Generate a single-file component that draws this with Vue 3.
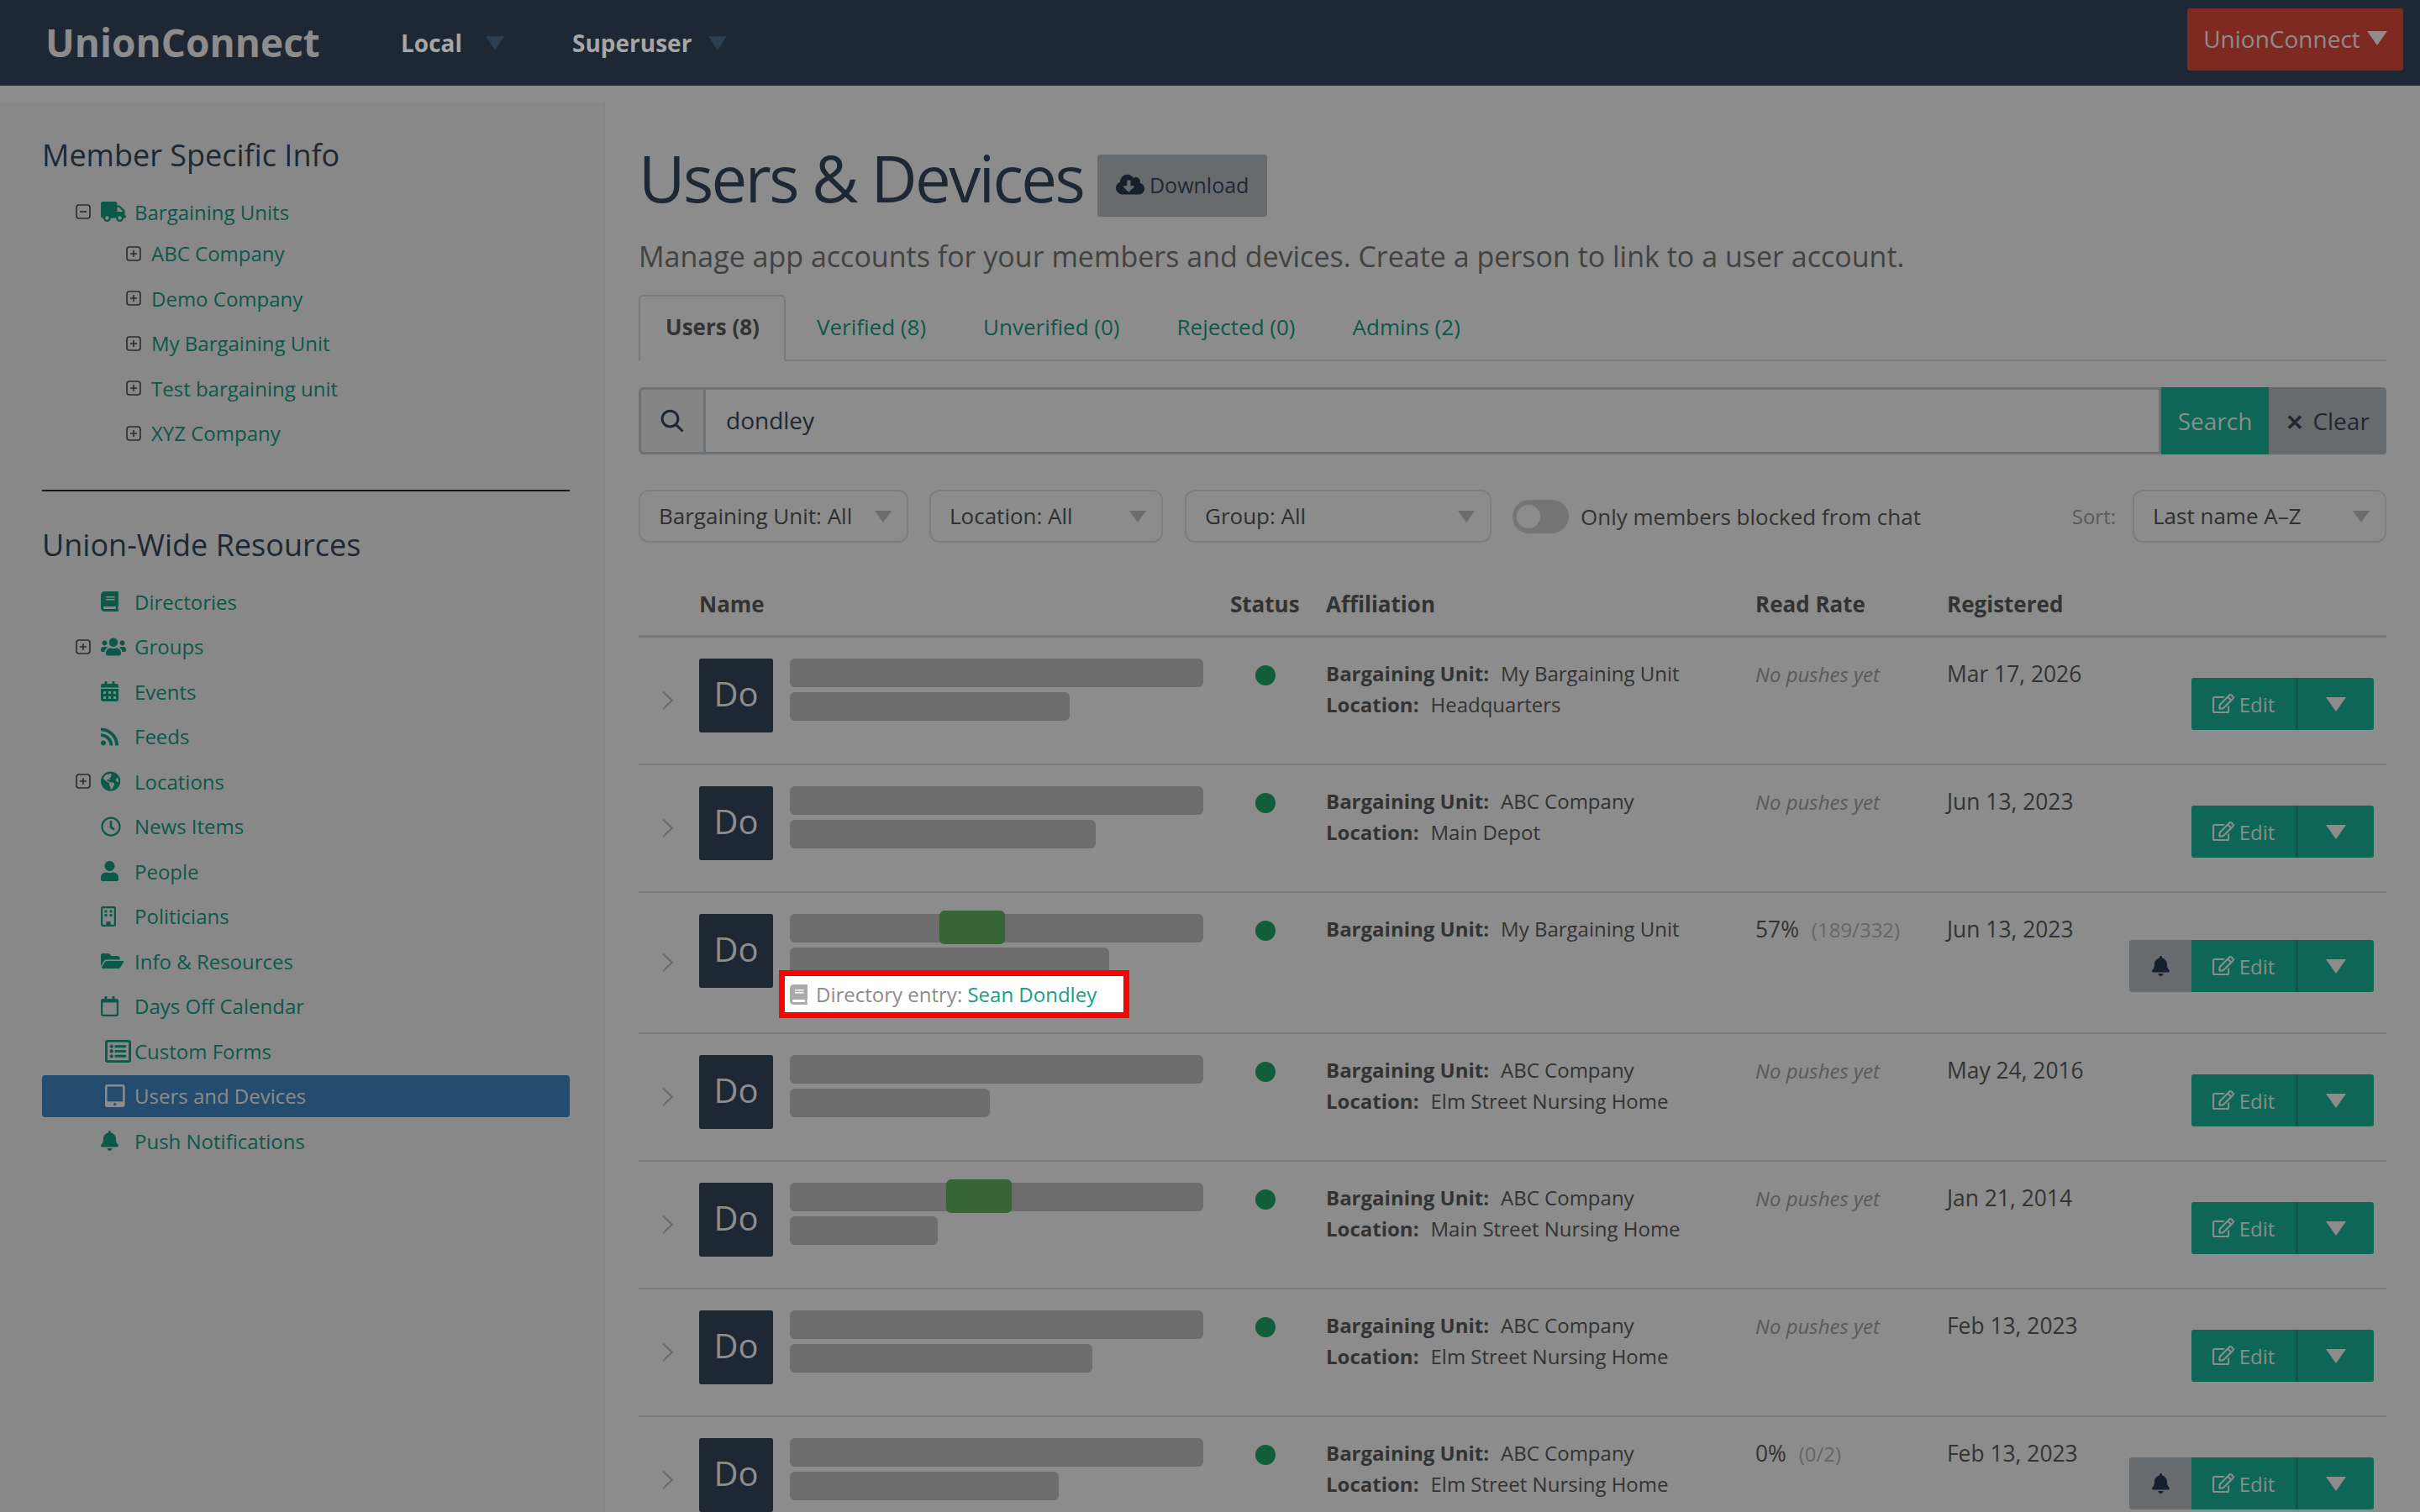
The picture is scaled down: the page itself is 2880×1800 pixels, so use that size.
<template>
  <div class="page">
    <header class="topbar">
      <div class="logo">UnionConnect</div>
      <div class="nav-item local">Local <span class="nav-caret"></span></div>
      <div class="nav-item super">Superuser <span class="nav-caret"></span></div>
      <button class="account">UnionConnect <span class="account-caret"></span></button>
    </header>

    <div class="layout">
      <aside class="sidebar">
        <h2 class="side-title">Member Specific Info</h2>
        <ul class="tree first-tree">
          <li class="tree-row head-row">
            <span class="toggle"><svg viewBox="0 0 18 18"><rect x="1" y="1" width="16" height="16" rx="3" /><path d="M5 9h8" /></svg></span>
            <span class="ico"><svg viewBox="0 0 640 512"><path :d="icons.truck.d" /></svg></span>
            <a>Bargaining Units</a>
          </li>
          <li v-for="unit in units" :key="unit" class="tree-row sub-row">
            <span class="toggle"><svg viewBox="0 0 18 18"><rect x="1" y="1" width="16" height="16" rx="3" /><path d="M5 9h8M9 5v8" /></svg></span>
            <a>{{ unit }}</a>
          </li>
        </ul>
        <hr class="side-rule" />
        <h2 class="side-title">Union-Wide Resources</h2>
        <ul class="tree second-tree">
          <li v-for="item in resources" :key="item.label" class="tree-row" :class="{ active: item.active }">
            <span class="toggle">
              <svg v-if="item.plus" viewBox="0 0 18 18"><rect x="1" y="1" width="16" height="16" rx="3" /><path d="M5 9h8M9 5v8" /></svg>
            </span>
            <span class="ico" :class="item.icon">
              <svg :viewBox="icons[item.icon].box"><path fill-rule="evenodd" :d="icons[item.icon].d" /></svg>
            </span>
            <a>{{ item.label }}</a>
          </li>
        </ul>
      </aside>

      <main class="content">
        <div class="title-row">
          <h1>Users &amp; Devices</h1>
          <button class="download">
            <svg viewBox="0 0 640 512"><path :d="icons.cloud.d" /></svg>
            Download
          </button>
        </div>
        <p class="lead">Manage app accounts for your members and devices. Create a person to link to a user account.</p>

        <nav class="tabs">
          <a class="tab active">Users (8)</a>
          <a class="tab">Verified (8)</a>
          <a class="tab">Unverified (0)</a>
          <a class="tab">Rejected (0)</a>
          <a class="tab">Admins (2)</a>
        </nav>

        <div class="search">
          <span class="search-icon">
            <svg viewBox="0 0 24 24"><circle cx="10" cy="10" r="7.5" /><path d="M15.500 15.500 22 22" /></svg>
          </span>
          <input class="search-input" value="dondley" readonly />
          <button class="search-btn">Search</button>
          <button class="clear-btn"><span class="x">✕</span> Clear</button>
        </div>

        <div class="filters">
          <div class="select bu">Bargaining Unit: All<span class="tri"></span></div>
          <div class="select loc">Location: All<span class="tri"></span></div>
          <div class="select grp">Group: All<span class="tri"></span></div>
          <span class="switch"><span class="knob"></span></span>
          <span class="switch-label">Only members blocked from chat</span>
          <span class="sort-label">Sort:</span>
          <div class="select sort">Last name A–Z<span class="tri"></span></div>
        </div>

        <div class="table-head">
          <span></span>
          <span>Name</span>
          <span>Status</span>
          <span>Affiliation</span>
          <span>Read Rate</span>
          <span>Registered</span>
        </div>

        <div v-for="(row, i) in rows" :key="i" class="row" :class="{ tall: row.entry }">
          <span class="chev">
            <svg viewBox="0 0 14 22"><path d="M2 1.500 12 11 2 20.500" /></svg>
          </span>
          <div class="name-cell">
            <div class="avatar">Do</div>
            <div class="bars">
              <div class="bar">
                <span v-if="row.green" class="green" :style="{ left: row.green + 'px' }"></span>
              </div>
              <div class="bar" :style="{ width: row.bar + 'px' }"></div>
              <div v-if="row.entry" class="entry">
                <svg viewBox="0 0 448 512"><path :d="icons.book.d" /></svg>
                Directory entry:&nbsp;<a>Sean Dondley</a>
              </div>
            </div>
          </div>
          <div class="status-cell"><span class="dot"></span></div>
          <div class="aff-cell">
            <div><b>Bargaining Unit:</b>{{ row.unit }}</div>
            <div v-if="row.loc"><b>Location:</b>{{ row.loc }}</div>
          </div>
          <div class="rate-cell">
            <em v-if="!row.rate">No pushes yet</em>
            <template v-else>{{ row.rate }} <small>{{ row.count }}</small></template>
          </div>
          <div class="date-cell">{{ row.date }}</div>
          <div class="actions">
            <button v-if="row.rate" class="bell-btn">
              <svg viewBox="0 0 448 512"><path :d="icons.bell.d" /></svg>
            </button>
            <button class="edit">
              <svg viewBox="0 0 576 512"><path :d="icons.edit.d" /></svg>
              Edit
            </button>
            <button class="more"><span class="more-tri"></span></button>
          </div>
        </div>
      </main>
    </div>
  </div>
</template>

<script setup>
const icons = {
  truck: { box: '0 0 640 512', d: 'M624 352h-16V243.9c0-12.7-5.1-24.9-14.1-33.9L494 110.1c-9-9-21.2-14.1-33.9-14.1H416V48c0-26.5-21.5-48-48-48H48C21.5 0 0 21.5 0 48v320c0 26.5 21.5 48 48 48h16c0 53 43 96 96 96s96-43 96-96h128c0 53 43 96 96 96s96-43 96-96h48c8.8 0 16-7.2 16-16v-32c0-8.8-7.2-16-16-16zM160 464c-26.5 0-48-21.5-48-48s21.5-48 48-48 48 21.5 48 48-21.5 48-48 48zm320 0c-26.5 0-48-21.5-48-48s21.5-48 48-48 48 21.5 48 48-21.5 48-48 48zm80-208H416V144h44.1l99.9 99.9V256z' },
  book: { box: '0 0 448 512', d: 'M448 360V24c0-13.3-10.7-24-24-24H96C43 0 0 43 0 96v320c0 53 43 96 96 96h328c13.3 0 24-10.7 24-24v-16c0-7.5-3.5-14.3-8.9-18.7-4.2-15.4-4.2-59.3 0-74.7 5.4-4.3 8.9-11.1 8.9-18.6zM128 134c0-3.3 2.7-6 6-6h212c3.3 0 6 2.7 6 6v20c0 3.3-2.7 6-6 6H134c-3.3 0-6-2.7-6-6v-20zm0 64c0-3.3 2.7-6 6-6h212c3.3 0 6 2.7 6 6v20c0 3.3-2.7 6-6 6H134c-3.3 0-6-2.7-6-6v-20zm253.4 250H96c-17.7 0-32-14.3-32-32 0-17.6 14.4-32 32-32h285.4c-1.9 17.1-1.9 46.9 0 64z' },
  users: { box: '0 0 640 512', d: 'M96 224c35.3 0 64-28.7 64-64s-28.7-64-64-64-64 28.7-64 64 28.7 64 64 64zm448 0c35.3 0 64-28.7 64-64s-28.7-64-64-64-64 28.7-64 64 28.7 64 64 64zm32 32h-64c-17.6 0-33.5 7.1-45.1 18.6 40.3 22.1 68.9 62 75.1 109.4h66c17.7 0 32-14.3 32-32v-32c0-35.3-28.7-64-64-64zm-256 0c61.9 0 112-50.1 112-112S381.9 32 320 32 208 82.1 208 144s50.1 112 112 112zm76.8 32h-8.3c-20.8 10-43.9 16-68.5 16s-47.6-6-68.5-16h-8.3C179.6 288 128 339.6 128 403.2V432c0 26.5 21.5 48 48 48h288c26.5 0 48-21.5 48-48v-28.8c0-63.6-51.6-115.2-115.2-115.2zm-223.7-13.4C161.5 263.1 145.6 256 128 256H64c-35.3 0-64 28.7-64 64v32c0 17.7 14.3 32 32 32h65.9c6.3-47.4 34.9-87.3 75.2-109.4z' },
  calendarAlt: { box: '0 0 448 512', d: 'M0 464c0 26.5 21.5 48 48 48h352c26.5 0 48-21.5 48-48V192H0v272zm320-196c0-6.6 5.4-12 12-12h40c6.6 0 12 5.4 12 12v40c0 6.6-5.4 12-12 12h-40c-6.6 0-12-5.4-12-12v-40zm0 128c0-6.6 5.4-12 12-12h40c6.6 0 12 5.4 12 12v40c0 6.6-5.4 12-12 12h-40c-6.6 0-12-5.4-12-12v-40zM192 268c0-6.6 5.4-12 12-12h40c6.6 0 12 5.4 12 12v40c0 6.6-5.4 12-12 12h-40c-6.6 0-12-5.4-12-12v-40zm0 128c0-6.6 5.4-12 12-12h40c6.6 0 12 5.4 12 12v40c0 6.6-5.4 12-12 12h-40c-6.6 0-12-5.4-12-12v-40zM64 268c0-6.6 5.4-12 12-12h40c6.6 0 12 5.4 12 12v40c0 6.6-5.4 12-12 12H76c-6.6 0-12-5.4-12-12v-40zm0 128c0-6.6 5.4-12 12-12h40c6.6 0 12 5.4 12 12v40c0 6.6-5.4 12-12 12H76c-6.6 0-12-5.4-12-12v-40zM400 64h-48V16c0-8.8-7.2-16-16-16h-32c-8.8 0-16 7.2-16 16v48H160V16c0-8.8-7.2-16-16-16h-32c-8.8 0-16 7.2-16 16v48H48C21.5 64 0 85.5 0 112v48h448v-48c0-26.5-21.5-48-48-48z' },
  rss: { box: '0 0 448 512', d: 'M128.081 415.959c0 35.369-28.672 64.041-64.041 64.041S0 451.328 0 415.959s28.672-64.041 64.041-64.041 64.04 28.673 64.04 64.041zm175.66 47.25c-8.354-154.6-132.185-278.587-286.95-286.95C7.656 175.765 0 183.105 0 192.253v48.069c0 8.415 6.49 15.472 14.887 16.018 111.832 7.284 201.473 96.702 208.772 208.772.547 8.397 7.604 14.887 16.018 14.887h48.069c9.149.001 16.489-7.655 15.995-16.79zm144.249.288C439.596 229.677 251.465 40.445 16.503 32.01 7.473 31.686 0 38.981 0 48.016v48.068c0 8.625 6.835 15.645 15.453 15.999 191.179 7.839 344.627 161.316 352.465 352.465.353 8.618 7.373 15.453 15.999 15.453h48.068c9.034-.001 16.329-7.474 16.005-16.504z' },
  globe: { box: '0 0 496 512', d: 'M248 8C111.03 8 0 119.03 0 256s111.03 248 248 248 248-111.03 248-248S384.97 8 248 8zm82.29 357.6c-3.9 3.88-7.99 7.95-11.31 11.28-2.99 3-5.1 6.7-6.17 10.71-1.51 5.66-2.73 11.38-4.77 16.87l-17.39 46.85c-13.76 3-28 4.69-42.65 4.69v-27.38c1.69-12.62-7.64-36.26-22.63-51.25-6-6-9.37-14.14-9.37-22.63v-32.01c0-11.64-6.27-22.34-16.46-27.97-14.37-7.95-34.81-19.06-48.81-26.11-11.48-5.78-22.1-13.14-31.65-21.75l-.8-.72a114.792 114.792 0 0 1-18.06-20.74c-9.38-13.77-24.66-36.42-34.59-51.14 20.47-45.5 57.36-82.04 103.2-101.89l24.01 12.01C203.48 89.74 216 82.01 216 70.11v-11.3c7.99-1.29 16.12-2.11 24.39-2.42l28.3 28.3c6.25 6.25 6.25 16.38 0 22.63L264 112l-10.34 10.34c-3.12 3.12-3.12 8.19 0 11.31l4.69 4.69c3.12 3.12 3.12 8.19 0 11.31l-8 8a8.008 8.008 0 0 1-5.66 2.34h-8.99c-2.08 0-4.08.81-5.58 2.27l-9.92 9.65a8.008 8.008 0 0 0-1.58 9.31l15.59 31.19c2.66 5.32-1.21 11.58-7.15 11.58h-5.64c-1.93 0-3.79-.7-5.24-1.96l-9.28-8.06a16.017 16.017 0 0 0-15.55-3.1l-31.17 10.39a11.95 11.95 0 0 0-8.17 11.34c0 4.53 2.56 8.66 6.61 10.69l11.08 5.54c9.41 4.71 19.79 7.16 30.31 7.16s22.59 27.29 32 32h66.75c8.49 0 16.62 3.37 22.63 9.37l13.69 13.69a30.503 30.503 0 0 1 8.93 21.57 46.536 46.536 0 0 1-13.72 32.98zM417 274.25c-5.79-1.45-10.84-5-14.15-9.97l-17.98-26.97a23.97 23.97 0 0 1 0-26.62l19.59-29.38c2.32-3.47 5.5-6.29 9.24-8.15l12.98-6.49C440.2 193.59 448 223.87 448 256c0 8.67-.74 17.16-1.82 25.54L417 274.25z' },
  clock: { box: '0 0 512 512', d: 'M256 8C119 8 8 119 8 256s111 248 248 248 248-111 248-248S393 8 256 8zm0 448c-110.5 0-200-89.5-200-200S145.5 56 256 56s200 89.5 200 200-89.5 200-200 200zm61.8-104.4l-84.9-61.7c-3.1-2.3-4.9-5.9-4.9-9.7V116c0-6.6 5.4-12 12-12h32c6.6 0 12 5.4 12 12v141.7l66.8 48.6c5.4 3.9 6.5 11.4 2.6 16.8L334.6 349c-3.9 5.3-11.4 6.5-16.8 2.6z' },
  user: { box: '0 0 448 512', d: 'M224 256c70.7 0 128-57.3 128-128S294.7 0 224 0 96 57.3 96 128s57.3 128 128 128zm89.6 32h-16.7c-22.2 10.2-46.9 16-72.9 16s-50.6-5.8-72.9-16h-16.7C60.2 288 0 348.2 0 422.4V464c0 26.5 21.5 48 48 48h352c26.5 0 48-21.5 48-48v-41.6c0-74.2-60.2-134.4-134.4-134.4z' },
  building: { box: '0 0 384 512', d: 'M48 0h288c26.5 0 48 21.5 48 48v416c0 26.5-21.5 48-48 48H48c-26.5 0-48-21.5-48-48V48C0 21.5 21.5 0 48 0zm4 48c-2.2 0-4 1.8-4 4v408c0 2.2 1.8 4 4 4h84v-68c0-6.6 5.4-12 12-12h88c6.6 0 12 5.4 12 12v68h84c2.2 0 4-1.8 4-4V52c0-2.2-1.8-4-4-4zm56 48h40c6.6 0 12 5.4 12 12v40c0 6.6-5.4 12-12 12h-40c-6.6 0-12-5.4-12-12v-40c0-6.600 5.400-12 12-12zm128 0h40c6.6 0 12 5.4 12 12v40c0 6.6-5.4 12-12 12h-40c-6.6 0-12-5.4-12-12v-40c0-6.6 5.4-12 12-12zM108 192h40c6.6 0 12 5.4 12 12v40c0 6.6-5.4 12-12 12h-40c-6.6 0-12-5.400-12-12v-40c0-6.6 5.4-12 12-12zm128 0h40c6.6 0 12 5.4 12 12v40c0 6.6-5.4 12-12 12h-40c-6.6 0-12-5.4-12-12v-40c0-6.6 5.4-12 12-12z' },
  folder: { box: '0 0 576 512', d: 'M572.694 292.093L500.27 416.248A63.997 63.997 0 0 1 444.989 448H45.025c-18.523 0-30.064-20.093-20.731-36.093l72.424-124.155A64 64 0 0 1 152 256h399.964c18.523 0 30.064 20.093 20.73 36.093zM152 224h328v-48c0-26.51-21.49-48-48-48H272l-64-64H48C21.49 64 0 85.49 0 112v278.046l69.077-118.418C86.214 242.25 117.989 224 152 224z' },
  calendar: { box: '0 0 448 512', d: 'M400 64h-48V12c0-6.6-5.4-12-12-12h-40c-6.6 0-12 5.4-12 12v52H160V12c0-6.6-5.4-12-12-12h-40c-6.6 0-12 5.4-12 12v52H48C21.5 64 0 85.5 0 112v352c0 26.5 21.5 48 48 48h352c26.5 0 48-21.5 48-48V112c0-26.5-21.500-48-48-48zm-6 400H54c-3.3 0-6-2.7-6-6V160h352v298c0 3.3-2.7 6-6 6z' },
  list: { box: '0 0 512 512', d: 'M464 32H48C21.49 32 0 53.49 0 80v352c0 26.51 21.49 48 48 48h416c26.51 0 48-21.49 48-48V80c0-26.51-21.49-48-48-48zm-6 400H54a6 6 0 0 1-6-6V86a6 6 0 0 1 6-6h404a6 6 0 0 1 6 6v340a6 6 0 0 1-6 6zm-42-92v24c0 6.627-5.373 12-12 12H204c-6.627 0-12-5.373-12-12v-24c0-6.627 5.373-12 12-12h200c6.627 0 12 5.373 12 12zm0-96v24c0 6.627-5.373 12-12 12H204c-6.627 0-12-5.373-12-12v-24c0-6.627 5.373-12 12-12h200c6.627 0 12 5.373 12 12zm0-96v24c0 6.627-5.373 12-12 12H204c-6.627 0-12-5.373-12-12v-24c0-6.627 5.373-12 12-12h200c6.627 0 12 5.373 12 12zm-252 12c0 19.882-16.118 36-36 36s-36-16.118-36-36 16.118-36 36-36 36 16.118 36 36zm0 96c0 19.882-16.118 36-36 36s-36-16.118-36-36 16.118-36 36-36 36 16.118 36 36zm0 96c0 19.882-16.118 36-36 36s-36-16.118-36-36 16.118-36 36-36 36 16.118 36 36z' },
  tablet: { box: '0 0 448 512', d: 'M400 0H48C21.5 0 0 21.5 0 48v416c0 26.5 21.5 48 48 48h352c26.5 0 48-21.5 48-48V48c0-26.5-21.5-48-48-48zM224 480c-17.7 0-32-14.3-32-32s14.3-32 32-32 32 14.3 32 32-14.3 32-32 32zm176-108c0 6.6-5.4 12-12 12H60c-6.6 0-12-5.4-12-12V60c0-6.6 5.4-12 12-12h328c6.6 0 12 5.4 12 12v312z' },
  bell: { box: '0 0 448 512', d: 'M224 512c35.32 0 63.97-28.65 63.97-64H160.03c0 35.35 28.65 64 63.97 64zm215.39-149.71c-19.32-20.76-55.47-51.99-55.47-154.29 0-77.7-54.48-139.9-127.94-155.16V32c0-17.67-14.32-32-31.98-32s-31.98 14.33-31.98 32v20.84C118.56 68.1 64.08 130.3 64.08 208c0 102.3-36.15 133.53-55.47 154.29-6 6.45-8.66 14.16-8.61 21.71.11 16.4 12.98 32 32.1 32h383.8c19.12 0 32-15.6 32.1-32 .05-7.55-2.61-15.27-8.61-21.71z' },
  cloud: { box: '0 0 640 512', d: 'M537.6 226.6c4.1-10.7 6.4-22.4 6.4-34.6 0-53-43-96-96-96-19.7 0-38.1 6-53.3 16.2C367 64.2 315.3 32 256 32c-88.4 0-160 71.6-160 160 0 2.7.1 5.4.2 8.1C40.2 219.8 0 273.2 0 336c0 79.5 64.5 144 144 144h368c70.7 0 128-57.3 128-128 0-61.9-44-113.6-102.4-125.4zm-132.9 88.7L299.3 420.7c-6.2 6.2-16.4 6.2-22.6 0L171.3 315.3c-10.1-10.1-2.9-27.3 11.3-27.3H248V176c0-8.8 7.2-16 16-16h48c8.8 0 16 7.2 16 16v112h65.4c14.2 0 21.4 17.2 11.3 27.3z' },
  edit: { box: '0 0 576 512', d: 'M402.3 344.9l32-32c5-5 13.7-1.5 13.7 5.7V464c0 26.5-21.5 48-48 48H48c-26.5 0-48-21.5-48-48V112c0-26.5 21.5-48 48-48h273.5c7.1 0 10.7 8.6 5.7 13.7l-32 32c-1.5 1.5-3.5 2.3-5.7 2.3H48v352h352V350.5c0-2.1.8-4.1 2.3-5.6zm156.6-201.8L296.3 405.7l-90.4 10c-26.2 2.9-48.5-19.2-45.6-45.6l10-90.4L432.9 17.1c22.9-22.9 59.9-22.9 82.7 0l43.2 43.2c22.9 22.9 22.9 60 .1 82.8zM460.1 174L402 115.9 216.2 301.8l-7.3 65.3 65.3-7.3L460.1 174zm64.8-79.7l-43.2-43.2c-4.1-4.1-10.8-4.1-14.8 0L436 82l58.1 58.1 30.9-30.9c4-4.2 4-10.8-.1-14.9z' },
};

const units = ['ABC Company', 'Demo Company', 'My Bargaining Unit', 'Test bargaining unit', 'XYZ Company'];

const resources = [
  { label: 'Directories', icon: 'book' },
  { label: 'Groups', icon: 'users', plus: true },
  { label: 'Events', icon: 'calendarAlt' },
  { label: 'Feeds', icon: 'rss' },
  { label: 'Locations', icon: 'globe', plus: true },
  { label: 'News Items', icon: 'clock' },
  { label: 'People', icon: 'user' },
  { label: 'Politicians', icon: 'building' },
  { label: 'Info & Resources', icon: 'folder' },
  { label: 'Days Off Calendar', icon: 'calendar' },
  { label: 'Custom Forms', icon: 'list' },
  { label: 'Users and Devices', icon: 'tablet', active: true },
  { label: 'Push Notifications', icon: 'bell' },
];

const rows = [
  { bar: 333, unit: 'My Bargaining Unit', loc: 'Headquarters', date: 'Mar 17, 2026' },
  { bar: 364, unit: 'ABC Company', loc: 'Main Depot', date: 'Jun 13, 2023' },
  { bar: 380, green: 178, unit: 'My Bargaining Unit', rate: '57%', count: '(189/332)', date: 'Jun 13, 2023', entry: true },
  { bar: 238, unit: 'ABC Company', loc: 'Elm Street Nursing Home', date: 'May 24, 2016' },
  { bar: 176, green: 186, unit: 'ABC Company', loc: 'Main Street Nursing Home', date: 'Jan 21, 2014' },
  { bar: 360, unit: 'ABC Company', loc: 'Elm Street Nursing Home', date: 'Feb 13, 2023' },
  { bar: 320, unit: 'ABC Company', loc: 'Elm Street Nursing Home', rate: '0%', count: '(0/2)', date: 'Feb 13, 2023' },
];
</script>

<style>
html,
body {
  margin: 0;
  height: 100%;
  overflow: hidden;
  background: #8c8c8c;
}
</style>

<style scoped>
.page {
  height: 1800px;
  overflow: hidden;
  font-family: "Open Sans", "Liberation Sans", sans-serif;
  font-size: 26px;
  color: #333;
  background: #8c8c8c;
}
button {
  font-family: inherit;
  border: none;
  cursor: pointer;
}
a {
  color: #0c5849;
}

/* top bar */
.topbar {
  height: 102px;
  background: #1d2834;
  display: flex;
  align-items: center;
  padding: 0 20px 0 54px;
}
.logo {
  font-size: 46px;
  font-weight: 700;
  color: #8c8c8c;
  width: 423px;
  margin-top: -2px;
}
.nav-item {
  font-size: 28px;
  font-weight: 700;
  color: #a6a6a6;
  display: flex;
  align-items: center;
  gap: 28px;
}
.nav-item.local {
  width: 204px;
}
.nav-item.super {
  gap: 20px;
}
.nav-caret {
  width: 0;
  height: 0;
  border-left: 11px solid transparent;
  border-right: 11px solid transparent;
  border-top: 17px solid #2c3e50;
}
.account {
  margin-left: auto;
  margin-top: -8px;
  width: 257px;
  height: 74px;
  padding: 0 0 3px;
  background: #7f2a21;
  color: #8c8c8c;
  font-size: 28px;
  border-radius: 3px;
  display: flex;
  align-items: center;
  justify-content: center;
  gap: 8px;
}
.account-caret {
  width: 0;
  height: 0;
  border-left: 12px solid transparent;
  border-right: 12px solid transparent;
  border-top: 17px solid #8c8c8c;
}

/* layout */
.layout {
  display: flex;
  padding-top: 20px;
}
.sidebar {
  width: 720px;
  height: 1678px;
  box-sizing: border-box;
  flex: none;
  background: #888;
  border-right: 2px solid #858585;
  padding: 38px 40px 0 50px;
}
.side-title {
  margin: 0;
  font-size: 36px;
  line-height: 50px;
  font-weight: 400;
  color: #1d2834;
}
.tree {
  list-style: none;
  margin: 0;
  padding: 0;
}
.first-tree {
  margin-top: 19px;
}
.tree-row {
  display: flex;
  align-items: center;
  height: 53.5px;
  margin-left: 0;
  padding-left: 40px;
  font-size: 24px;
}
.head-row {
  height: 46px;
}
.sub-row {
  padding-left: 100px;
}
.toggle {
  width: 30px;
  flex: none;
  display: flex;
}
.toggle svg {
  width: 18px;
  height: 18px;
  fill: none;
  stroke: #2b2b2b;
  stroke-width: 1.6;
}
.ico {
  width: 40px;
  flex: none;
  display: flex;
  align-items: center;
}
.ico svg {
  height: 24px;
  width: auto;
  fill: #0c5849;
}
.ico.list svg {
  height: 31px;
  margin-left: 5px;
}
.ico.tablet svg {
  height: 27px;
  margin-left: 5px;
  fill: #8c8c8c;
}
.side-rule {
  border: none;
  height: 2px;
  background: #1a1a1a;
  margin: 40px 0 39px;
}
.second-tree {
  margin-top: 16px;
}
.tree-row.active {
  background: #244c6f;
  border-radius: 4px;
  height: 50px;
  margin-top: 1.75px;
  margin-bottom: 1.75px;
}
.tree-row.active a {
  color: #8c8c8c;
}

/* main column */
.content {
  flex: 1;
  min-width: 0;
  padding: 62px 40px 0 40px;
}
.title-row {
  display: flex;
  align-items: center;
  height: 74px;
}
h1 {
  margin: -18px 17px 0 0;
  font-size: 76px;
  line-height: 74px;
  font-weight: 400;
  color: #1d2834;
  letter-spacing: -2.5px;
}
.download {
  width: 202px;
  height: 74px;
  padding: 0 0 2px;
  background: #686b6e;
  color: #1d2834;
  font-size: 25px;
  border-radius: 3px;
  display: flex;
  align-items: center;
  justify-content: center;
  gap: 6px;
}
.download svg {
  width: 34px;
  fill: #16202c;
}
.lead {
  margin: 25px 0 0;
  font-size: 34px;
  line-height: 44px;
  color: #424242;
}
.tabs {
  display: flex;
  margin-top: 24px;
  height: 77px;
  border-bottom: 2px solid #787878;
}
.tab {
  padding: 0 31px 0 37px;
  height: 78px;
  line-height: 77px;
  font-size: 26px;
}
.tab.active {
  color: #333;
  font-weight: 700;
  box-sizing: border-box;
  height: 79px;
  width: 175px;
  padding: 0 0 0 30px;
  line-height: 73px;
  border: 2px solid #787878;
  border-bottom-color: #8c8c8c;
  border-radius: 6px 6px 0 0;
}
.search {
  display: flex;
  height: 80px;
  margin-top: 31px;
  box-sizing: border-box;
}
.search-icon {
  width: 80px;
  box-sizing: border-box;
  background: #858585;
  border: 3px solid #6c7176;
  border-radius: 6px 0 0 6px;
  display: flex;
  align-items: center;
  justify-content: center;
}
.search-icon svg {
  width: 30px;
  fill: none;
  stroke: #1d2834;
  stroke-width: 2.4;
}
.search-input {
  flex: 1;
  min-width: 0;
  box-sizing: border-box;
  background: transparent;
  border: 3px solid #6c7176;
  border-left: none;
  padding: 0 0 2px 24px;
  font-family: inherit;
  font-size: 28px;
  color: #1d2834;
  outline: none;
}
.search-btn {
  width: 128px;
  background: #0e6756;
  color: #8c8c8c;
  font-size: 28px;
}
.clear-btn {
  width: 140px;
  background: #686b6e;
  color: #1d2834;
  font-size: 28px;
  border-radius: 0 4px 4px 0;
}
.x {
  font-size: 26px;
  font-weight: 700;
  margin-right: 3px;
}
.filters {
  display: flex;
  align-items: center;
  margin-top: 42px;
  height: 63px;
}
.select {
  position: relative;
  box-sizing: border-box;
  height: 63px;
  line-height: 59px;
  border: 2px solid #7d7d7d;
  border-radius: 12px;
  padding-left: 22px;
  font-size: 26px;
  color: #2f2f2f;
}
.tri {
  position: absolute;
  right: 18px;
  top: 23px;
  width: 0;
  height: 0;
  border-left: 10px solid transparent;
  border-right: 10px solid transparent;
  border-top: 14px solid #6c6c6c;
}
.select.bu {
  width: 321px;
  margin-right: 25px;
}
.select.loc {
  width: 278px;
  margin-right: 26px;
}
.select.grp {
  width: 365px;
  margin-right: 25px;
}
.switch {
  width: 67px;
  height: 40px;
  border-radius: 20px;
  background: #757575;
  display: flex;
  align-items: center;
  padding-left: 5px;
  box-sizing: border-box;
}
.knob {
  width: 28px;
  height: 28px;
  border-radius: 50%;
  background: #8c8c8c;
}
.switch-label {
  margin-left: 14px;
  font-size: 26px;
  color: #333;
}
.sort-label {
  margin-left: auto;
  margin-right: 20px;
  font-size: 24px;
  color: #5a5a5a;
}
.select.sort {
  width: 302px;
}

/* table */
.table-head,
.row {
  display: grid;
  grid-template-columns: 72px 632px 114px 511px 228px 217px 1fr;
}
.table-head {
  height: 77px;
  margin-top: 36px;
  line-height: 74px;
  box-sizing: border-box;
  font-weight: 700;
  font-size: 26px;
  color: #333;
  border-bottom: 3px solid #787878;
}
.row {
  height: 152px;
  box-sizing: border-box;
  border-bottom: 2px solid #787878;
  font-size: 26.4px;
}
.row.tall {
  height: 168px;
}
.chev {
  display: flex;
  align-items: center;
  padding-left: 27px;
}
.chev svg {
  width: 15px;
  fill: none;
  stroke: #6a6a6a;
  stroke-width: 2;
}
.name-cell {
  display: flex;
  padding-top: 25px;
  min-width: 0;
}
.avatar {
  flex: none;
  width: 88px;
  height: 88px;
  background: #1d2834;
  color: #8c8c8c;
  font-size: 40px;
  line-height: 84px;
  text-align: center;
  border-radius: 3px;
}
.bars {
  margin-left: 20px;
  width: 492px;
}
.bar {
  position: relative;
  height: 34px;
  margin-bottom: 6px;
  background: #6d6d6d;
  border-radius: 6px;
}
.green {
  position: absolute;
  top: -4px;
  width: 78px;
  height: 40px;
  background: #366636;
  border-radius: 6px;
}
.entry {
  position: relative;
  box-sizing: border-box;
  width: 417px;
  height: 57px;
  margin: -13px 0 0 -13px;
  border: 7px solid #ff0000;
  background: #fff;
  display: flex;
  align-items: center;
  padding-left: 6px;
  font-size: 24px;
  white-space: nowrap;
  color: #8c8c8c;
}
.entry svg {
  width: 21px;
  margin-right: 10px;
  fill: #aaa;
}
.entry a {
  color: #16a085;
}
.status-cell {
  padding: 33px 0 0 30px;
}
.dot {
  display: block;
  width: 24px;
  height: 24px;
  border-radius: 50%;
  background: #0f5f3b;
}
.aff-cell {
  padding-top: 24px;
  font-size: 24px;
  line-height: 37px;
  white-space: nowrap;
}
.aff-cell b {
  margin-right: 14px;
}
.rate-cell {
  padding-top: 25px;
  line-height: 37px;
  white-space: nowrap;
}
.rate-cell em {
  font-size: 24px;
  color: #5a5a5a;
}
.rate-cell small {
  margin-left: 8px;
  font-size: 24px;
  color: #666;
}
.date-cell {
  padding-top: 25px;
  line-height: 37px;
  white-space: nowrap;
}
.actions {
  display: flex;
  align-items: center;
  justify-content: flex-end;
  padding: 8px 15px 0 0;
}
.actions button {
  height: 62px;
  display: flex;
  align-items: center;
  justify-content: center;
}
.bell-btn {
  width: 74px;
  background: #686b6e;
  border-radius: 3px 0 0 3px;
}
.bell-btn svg {
  width: 21px;
  fill: #15212e;
}
.edit {
  width: 127px;
  gap: 6px;
  background: #0e6756;
  color: #8c8c8c;
  font-size: 24px;
  border-right: 3px solid #0c5849;
}
.edit svg {
  width: 26px;
  fill: #8c8c8c;
}
.more {
  width: 90px;
  background: #0e6756;
  border-radius: 0 3px 3px 0;
}
.more-tri {
  width: 0;
  height: 0;
  border-left: 12px solid transparent;
  border-right: 12px solid transparent;
  border-top: 17px solid #8c8c8c;
}
.actions .edit:first-child {
  border-radius: 3px 0 0 3px;
}
</style>
